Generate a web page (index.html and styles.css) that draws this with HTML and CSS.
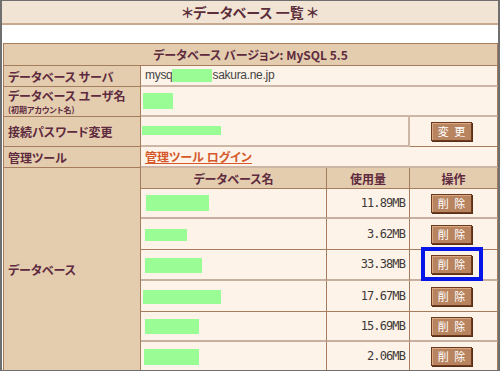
FILE: index.html
```html
<!DOCTYPE html>
<html lang="ja">
<head>
    <meta charset="UTF-8">
    <meta name="viewport" content="width=device-width, initial-scale=1.0">
    <title>データベース一覧</title>
    <link rel="stylesheet" href="styles.css">
</head>
<body>
    <div class="frame">
        <h1 class="title">＊データベース 一覧 ＊</h1>
        <table class="db">
            <colgroup>
                <col class="c-label">
                <col class="c-name">
                <col class="c-size">
                <col class="c-op">
            </colgroup>
            <tr class="r-22">
                <th class="head" colspan="4">データベース バージョン: MySQL 5.5</th>
            </tr>
            <tr class="r-21">
                <th class="label">データベース サーバ</th>
                <td class="val host" colspan="3">mysq<span class="mask m-host"></span>sakura.ne.jp</td>
            </tr>
            <tr class="r-30">
                <th class="label two-line"><span class="main">データベース ユーザ名</span><small>(初期アカウント名)</small></th>
                <td class="val" colspan="3"><span class="mask m-user"></span></td>
            </tr>
            <tr class="r-30">
                <th class="label">接続パスワード変更</th>
                <td class="val split" colspan="2"><span class="mask m-pass"></span></td>
                <td class="val op"><button class="btn">変 更</button></td>
            </tr>
            <tr class="r-21">
                <th class="label">管理ツール</th>
                <td class="val" colspan="3"><a class="tool-link" href="#">管理ツール ログイン</a></td>
            </tr>
            <tr class="r-21">
                <th class="label db-label" rowspan="7">データベース</th>
                <th class="head sub">データベース名</th>
                <th class="head sub">使用量</th>
                <th class="head sub">操作</th>
            </tr>
            <tr class="r-30 light">
                <td class="val name"><span class="mask n1"></span></td>
                <td class="val size">11.89MB</td>
                <td class="val op"><button class="btn">削 除</button></td>
            </tr>
            <tr class="r-31">
                <td class="val name"><span class="mask n2"></span></td>
                <td class="val size">3.62MB</td>
                <td class="val op"><button class="btn">削 除</button></td>
            </tr>
            <tr class="r-31 light">
                <td class="val name"><span class="mask n3"></span></td>
                <td class="val size">33.38MB</td>
                <td class="val op"><button class="btn">削 除</button></td>
            </tr>
            <tr class="r-31">
                <td class="val name"><span class="mask n4"></span></td>
                <td class="val size">17.67MB</td>
                <td class="val op"><button class="btn">削 除</button></td>
            </tr>
            <tr class="r-30 light">
                <td class="val name"><span class="mask n5"></span></td>
                <td class="val size">15.69MB</td>
                <td class="val op"><button class="btn">削 除</button></td>
            </tr>
            <tr class="r-30">
                <td class="val name"><span class="mask n6"></span></td>
                <td class="val size">2.06MB</td>
                <td class="val op"><button class="btn">削 除</button></td>
            </tr>
        </table>
        <div class="highlight"></div>
    </div>
</body>
</html>
```

FILE: styles.css
```css
body {
    margin: 0;
    background: #fff;
}
.frame {
    position: relative;
    width: 500px;
    height: 371px;
    box-sizing: border-box;
    border: 1px solid #6f6f6f;
    border-left-width: 2px;
    border-right-width: 2px;
    overflow: hidden;
    background: #fff;
    font-family: "Noto Sans CJK JP", sans-serif;
    font-feature-settings: "palt";
}
.title {
    margin: 0;
    height: 22px;
    line-height: 22px;
    background: #f2e4d4;
    border-bottom: 2px solid #c9a98e;
    color: #5a2e3a;
    font-size: 14px;
    font-weight: bold;
    text-align: center;
}

/* main table */
.db {
    border-collapse: separate;
    border-spacing: 0;
    table-layout: fixed;
    width: 495px;
    margin: 18px 0 0 1px;
    border-top: 1px solid #a57c5c;
    border-left: 1px solid #a57c5c;
}
.c-label { width: 137px; }
.c-name { width: 186px; }
.c-size { width: 83px; }
.c-op { width: 88px; }
.r-21 { height: 21px; }
.r-22 { height: 22px; }
.r-30 { height: 30px; }
.r-31 { height: 31px; }
.db th,
.db td {
    padding: 0 4px;
    border-right: 1px solid #a57c5c;
    border-bottom: 1px solid #a57c5c;
    font-size: 12px;
    line-height: 13px;
    vertical-align: middle;
    white-space: nowrap;
    overflow: hidden;
}
.head {
    background: #e4cdaf;
    color: #5e2a3e;
    font-weight: bold;
    text-align: center;
}
.label {
    background: #e4cdaf;
    color: #5e2a3e;
    font-weight: bold;
    text-align: left;
}
.db th.two-line {
    padding-top: 0;
    padding-bottom: 0;
}
.two-line .main {
    display: block;
    line-height: 17px;
}
.two-line small {
    display: block;
    font-size: 8px;
    line-height: 12px;
}
.val {
    background: #fdf3e8;
    color: #444;
}
.db td.val {
    border-bottom: 2px solid #cdb6a6;
}
.db td.split {
    border-right: 2px solid #cdb6a6;
}
.db td.name,
.db td.size {
    border-right: 1px solid #a57c5c;
}
.db tr .val.name,
.db tr .val.size,
.db tr .val.op {
    border-bottom: 1px solid #a57c5c;
}
.db tr.light .val.name,
.db tr.light .val.size,
.db tr.light .val.op {
    border-bottom: 2px solid #c8b0a0;
}
.host {
    font-family: "Liberation Sans", sans-serif;
    font-size: 11px;
    letter-spacing: -0.3px;
}
.name {
    padding-left: 3px;
}
.size {
    text-align: right;
    font-family: "DejaVu Sans Mono", monospace;
    font-size: 11px;
    letter-spacing: -0.9px;
    color: #3f3a3a;
}
.db td.op {
    text-align: center;
    padding: 0 6px 0 2px;
}
.tool-link {
    color: #d6582a;
    font-weight: bold;
    text-decoration: underline;
}

/* redacted values */
.mask {
    display: inline-block;
    vertical-align: middle;
    background: #99fc95;
}
.m-host { width: 40px; height: 13px; }
.m-user { width: 30px; height: 16px; margin-left: -2px; }
.m-pass { width: 79px; height: 9px; margin: -6px 0 0 -3px; }
.n1 { width: 63px; height: 16px; margin-left: 1px; }
.n2 { width: 42px; height: 12px; }
.n3 { width: 57px; height: 15px; }
.n4 { width: 78px; height: 14px; margin-left: -2px; }
.n5 { width: 54px; height: 15px; }
.n6 { width: 55px; height: 16px; margin-left: -1px; }

.btn {
    width: 41px;
    height: 19px;
    padding: 0;
    border: 1px solid #6d3a1d;
    background: #b8845f;
    box-shadow: inset 1px 1px 0 #dba983, 1px 1px 0 #5a2f18;
    color: #fff;
    font-family: "Noto Sans CJK JP", sans-serif;
    font-size: 11px;
    line-height: 17px;
    word-spacing: 3px;
    vertical-align: middle;
}

/* callout around the third delete button */
.highlight {
    position: absolute;
    left: 419px;
    top: 246px;
    width: 62px;
    height: 34px;
    box-sizing: border-box;
    border: 4px solid #0716e8;
}
```
